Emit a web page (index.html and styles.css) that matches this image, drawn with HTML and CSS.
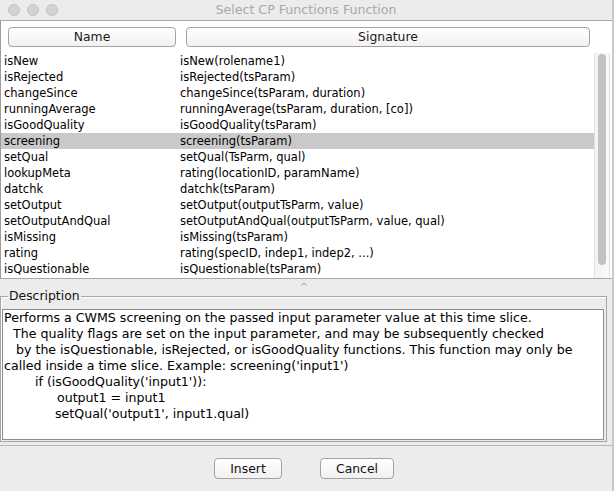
FILE: index.html
```html
<!DOCTYPE html>
<html>
<head>
<meta charset="utf-8">
<title>Select CP Functions Function</title>
<link rel="stylesheet" href="styles.css">
</head>
<body>
<div class="window">
  <div class="titlebar">
    <div class="lights">
      <span class="light"></span><span class="light"></span><span class="light"></span>
    </div>
    <div class="title">Select CP Functions Function</div>
  </div>

  <div class="tablepane">
    <div class="thead">
      <div class="hcell hname"><div class="hbtn">Name</div></div>
      <div class="hcell hsig"><div class="hbtn">Signature</div></div>
    </div>
    <div class="tbody">
      <div class="rows">
        <div class="row"><span class="cname">isNew</span><span class="csig">isNew(rolename1)</span></div>
        <div class="row"><span class="cname">isRejected</span><span class="csig">isRejected(tsParam)</span></div>
        <div class="row"><span class="cname">changeSince</span><span class="csig">changeSince(tsParam, duration)</span></div>
        <div class="row"><span class="cname">runningAverage</span><span class="csig">runningAverage(tsParam, duration, [co])</span></div>
        <div class="row"><span class="cname">isGoodQuality</span><span class="csig">isGoodQuality(tsParam)</span></div>
        <div class="row selected"><span class="cname">screening</span><span class="csig">screening(tsParam)</span></div>
        <div class="row"><span class="cname">setQual</span><span class="csig">setQual(TsParm, qual)</span></div>
        <div class="row"><span class="cname">lookupMeta</span><span class="csig">rating(locationID, paramName)</span></div>
        <div class="row"><span class="cname">datchk</span><span class="csig">datchk(tsParam)</span></div>
        <div class="row"><span class="cname">setOutput</span><span class="csig">setOutput(outputTsParm, value)</span></div>
        <div class="row"><span class="cname">setOutputAndQual</span><span class="csig">setOutputAndQual(outputTsParm, value, qual)</span></div>
        <div class="row"><span class="cname">isMissing</span><span class="csig">isMissing(tsParam)</span></div>
        <div class="row"><span class="cname">rating</span><span class="csig">rating(specID, indep1, indep2, ...)</span></div>
        <div class="row"><span class="cname">isQuestionable</span><span class="csig">isQuestionable(tsParam)</span></div>
      </div>
      <div class="vscroll"><div class="thumb"></div></div>
    </div>
  </div>

  <div class="divider">
    <svg class="grip" width="6" height="4" viewBox="0 0 6 4"><path d="M0.5 3.5 L3 1 L5.5 3.5" fill="none" stroke="#9a9a9a" stroke-width="1"/></svg>
  </div>

  <div class="lower">
    <fieldset class="group">
      <legend>Description</legend>
      <div class="textarea">
        <div class="line">Performs a CWMS screening on the passed input parameter value at this time slice.</div>
        <div class="line i1">The quality flags are set on the input parameter, and may be subsequently checked</div>
        <div class="line i2">by the isQuestionable, isRejected, or isGoodQuality functions. This function may only be</div>
        <div class="line">called inside a time slice. Example: screening('input1')</div>
        <div class="line i3">if (isGoodQuality('input1')):</div>
        <div class="line i4">output1 = input1</div>
        <div class="line i5">setQual('output1', input1.qual)</div>
      </div>
    </fieldset>
  </div>

  <div class="buttons">
    <div class="btn insert">Insert</div>
    <div class="btn cancel">Cancel</div>
  </div>
</div>
</body>
</html>
```
FILE: styles.css
```css
* { box-sizing: border-box; }
html, body { margin: 0; padding: 0; }
body {
  width: 614px;
  height: 491px;
  overflow: hidden;
  background: #ececec;
  font-family: "DejaVu Sans", "Liberation Sans", sans-serif;
  font-size: 12.5px;
  color: #000;
}
.window {
  width: 614px;
  height: 491px;
  background: #ececec;
  display: flex;
  flex-direction: column;
  border-right: 2px solid #c9c9c9;
}
.titlebar {
  height: 21px;
  flex: none;
  display: flex;
  align-items: center;
  background: #ececec;
  border-bottom: 1px solid #a9a9a9;
}
.lights {
  display: flex;
  gap: 7px;
  padding-left: 8px;
  width: 100px;
}
.light {
  width: 12px;
  height: 12px;
  border-radius: 50%;
  background: #d3d3d3;
  border: 1px solid #c3c3c3;
}
.title {
  flex: 1;
  text-align: center;
  margin-right: 100px;
  color: #a9a9a9;
  font-size: 12.6px;
  padding-bottom: 1px;
}
.tablepane {
  flex: none;
  background: #fff;
  border-left: 1px solid #9c9c9c;
  border-bottom: 1px solid #a8a8a8;
  height: 258px;
  display: flex;
  flex-direction: column;
}
.thead {
  height: 32px;
  flex: none;
  display: flex;
  padding-top: 6px;
}
.hcell { display: flex; }
.hname { width: 175px; padding-left: 7px; }
.hsig { width: 414px; padding-left: 10px; }
.hbtn {
  flex: 1;
  height: 20px;
  border: 1px solid #a3a3a3;
  border-radius: 4px;
  background: linear-gradient(#ffffff, #f1f1f1);
  text-align: center;
  line-height: 18px;
  font-size: 12.4px;
  color: #1a1a1a;
}
.tbody {
  flex: 1;
  display: flex;
}
.rows {
  width: 593px;
  flex: none;
  font-size: 11.5px;
}
.row {
  height: 16px;
  line-height: 16px;
  display: flex;
  white-space: nowrap;
}
.row.selected { background: #c9c9c9; }
.cname { width: 176px; padding-left: 3px; }
.csig { padding-left: 3px; }
.vscroll {
  width: 16px;
  flex: none;
  background: linear-gradient(to right, #f3f3f3, #fafafa);
  border-left: 1px solid #e3e3e3;
  border-right: 1px solid #dedede;
  padding: 1px 0 0 3px;
}
.thumb {
  width: 8px;
  height: 211px;
  border-radius: 4px;
  background: #c2c2c2;
}
.divider {
  height: 9px;
  flex: none;
  display: flex;
  justify-content: center;
  padding-top: 3px;
  padding-right: 4px;
}
.grip { display: block; }
.lower {
  flex: none;
  height: 158px;
  border-bottom: 1px solid #b9b9b9;
}
.group {
  margin: 0 5px 0 0;
  padding: 0 2px 1px 1px;
  border: 1px solid #a6a6a6;
  box-shadow: inset 1px 1px 0 #fff;
  min-width: 0;
}
.group legend {
  padding: 0 1px;
  margin-left: 6px;
  font-size: 12.4px;
  line-height: 16px;
  color: #111;
}
.textarea {
  margin-top: 5px;
  height: 131px;
  background: #fff;
  border: 1px solid #8e8e8e;
  padding: 0 0 0 1px;
  font-size: 12.6px;
}
.line {
  height: 16px;
  line-height: 16px;
  white-space: nowrap;
}
.i1 { padding-left: 9px; }
.i2 { padding-left: 12px; }
.i3 { padding-left: 31px; }
.i4 { padding-left: 53px; }
.i5 { padding-left: 51px; }
.buttons {
  flex: none;
  margin-top: 12px;
  display: flex;
  justify-content: center;
  gap: 38px;
  padding-right: 4px;
}
.btn {
  height: 21px;
  border: 1px solid #a2a2a2;
  border-radius: 4px;
  background: linear-gradient(#ffffff, #f0f0f0);
  text-align: center;
  line-height: 19px;
  font-size: 12.4px;
  color: #111;
}
.insert { width: 68px; }
.cancel { width: 74px; }
```
